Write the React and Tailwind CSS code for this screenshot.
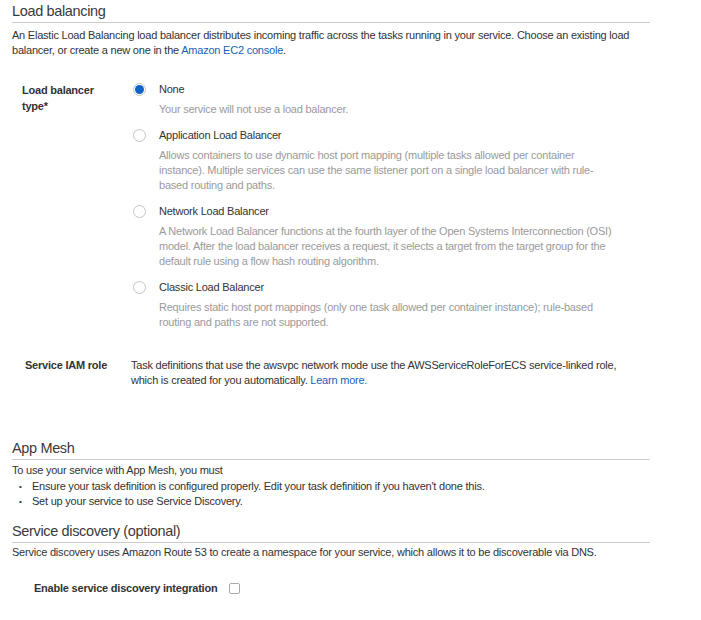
import React from "react";

const font = { fontFamily: '"Liberation Sans", Arial, sans-serif' };

function SectionHeading({ children }) {
  return (
    <div className="h-[22px] border-b border-[#cccccc] text-[14.5px] leading-[20px] tracking-[-0.35px] text-[#3a3a3a]">
      {children}
    </div>
  );
}

function Radio({ checked }) {
  return (
    <span className="flex h-[13px] w-[13px] items-center justify-center rounded-full border border-[#c4c4c4] bg-white">
      {checked && <span className="h-[9px] w-[9px] rounded-full bg-[#0f62c8]" />}
    </span>
  );
}

const options = [
  {
    title: "None",
    desc: ["Your service will not use a load balancer."],
    checked: true,
  },
  {
    title: "Application Load Balancer",
    desc: [
      "Allows containers to use dynamic host port mapping (multiple tasks allowed per container",
      "instance). Multiple services can use the same listener port on a single load balancer with rule-",
      "based routing and paths.",
    ],
  },
  {
    title: "Network Load Balancer",
    desc: [
      "A Network Load Balancer functions at the fourth layer of the Open Systems Interconnection (OSI)",
      "model. After the load balancer receives a request, it selects a target from the target group for the",
      "default rule using a flow hash routing algorithm.",
    ],
  },
  {
    title: "Classic Load Balancer",
    desc: [
      "Requires static host port mappings (only one task allowed per container instance); rule-based",
      "routing and paths are not supported.",
    ],
  },
];

export default function App() {
  return (
    <div
      style={font}
      className="w-[701px] bg-white pb-8 pl-3 text-[11px] leading-[15px] tracking-[-0.22px] text-[#333333]"
    >
      <div className="w-[638px] pt-[1px]">
        <SectionHeading>Load balancing</SectionHeading>
        <p className="mt-[5px] whitespace-nowrap">
          An Elastic Load Balancing load balancer distributes incoming traffic across the tasks running in your
          service. Choose an existing load
          <br />
          balancer, or create a new one in the <a className="text-[#1a5fb4]">Amazon EC2 console</a>.
        </p>

        <div className="mt-[24px] flex">
          <div className="w-[121px] pl-[10px] font-bold leading-[16px]">
            Load balancer
            <br />
            type*
          </div>
          <div className="flex flex-col gap-[11px]">
            {options.map((o) => (
              <div key={o.title} className="flex">
                <div className="w-[26px] pt-[1px]">
                  <Radio checked={o.checked} />
                </div>
                <div className="whitespace-nowrap">
                  <div className="leading-[15px]">{o.title}</div>
                  <div className="mt-[5px] text-[#9a9a9a]">
                    {o.desc.map((d) => (
                      <div key={d}>{d}</div>
                    ))}
                  </div>
                </div>
              </div>
            ))}
          </div>
        </div>

        <div className="mt-[28px] flex">
          <div className="w-[119px] pl-[13px] font-bold">Service IAM role</div>
          <div className="whitespace-nowrap">
            Task definitions that use the awsvpc network mode use the AWSServiceRoleForECS service-linked role,
            <br />
            which is created for you automatically. <a className="text-[#1a5fb4]">Learn more.</a>
          </div>
        </div>

        <div className="mt-[50px]">
          <SectionHeading>App Mesh</SectionHeading>
          <p className="mt-[3px]">To use your service with App Mesh, you must</p>
          <ul className="mt-[1px]">
            <li className="flex">
              <span className="w-[20px] pl-[7px] text-[8px]">•</span>
              Ensure your task definition is configured properly. Edit your task definition if you haven't done this.
            </li>
            <li className="flex">
              <span className="w-[20px] pl-[7px] text-[8px]">•</span>
              Set up your service to use Service Discovery.
            </li>
          </ul>
        </div>

        <div className="mt-[12px]">
          <SectionHeading>Service discovery (optional)</SectionHeading>
          <p className="mt-[2px]">
            Service discovery uses Amazon Route 53 to create a namespace for your service, which allows it to be
            discoverable via DNS.
          </p>
          <div className="mt-[21px] flex items-center pl-[22px]">
            <span className="font-bold">Enable service discovery integration</span>
            <span className="ml-[12px] h-[11px] w-[11px] rounded-[2px] border border-[#aaaaaa] bg-white" />
          </div>
        </div>
      </div>
    </div>
  );
}
